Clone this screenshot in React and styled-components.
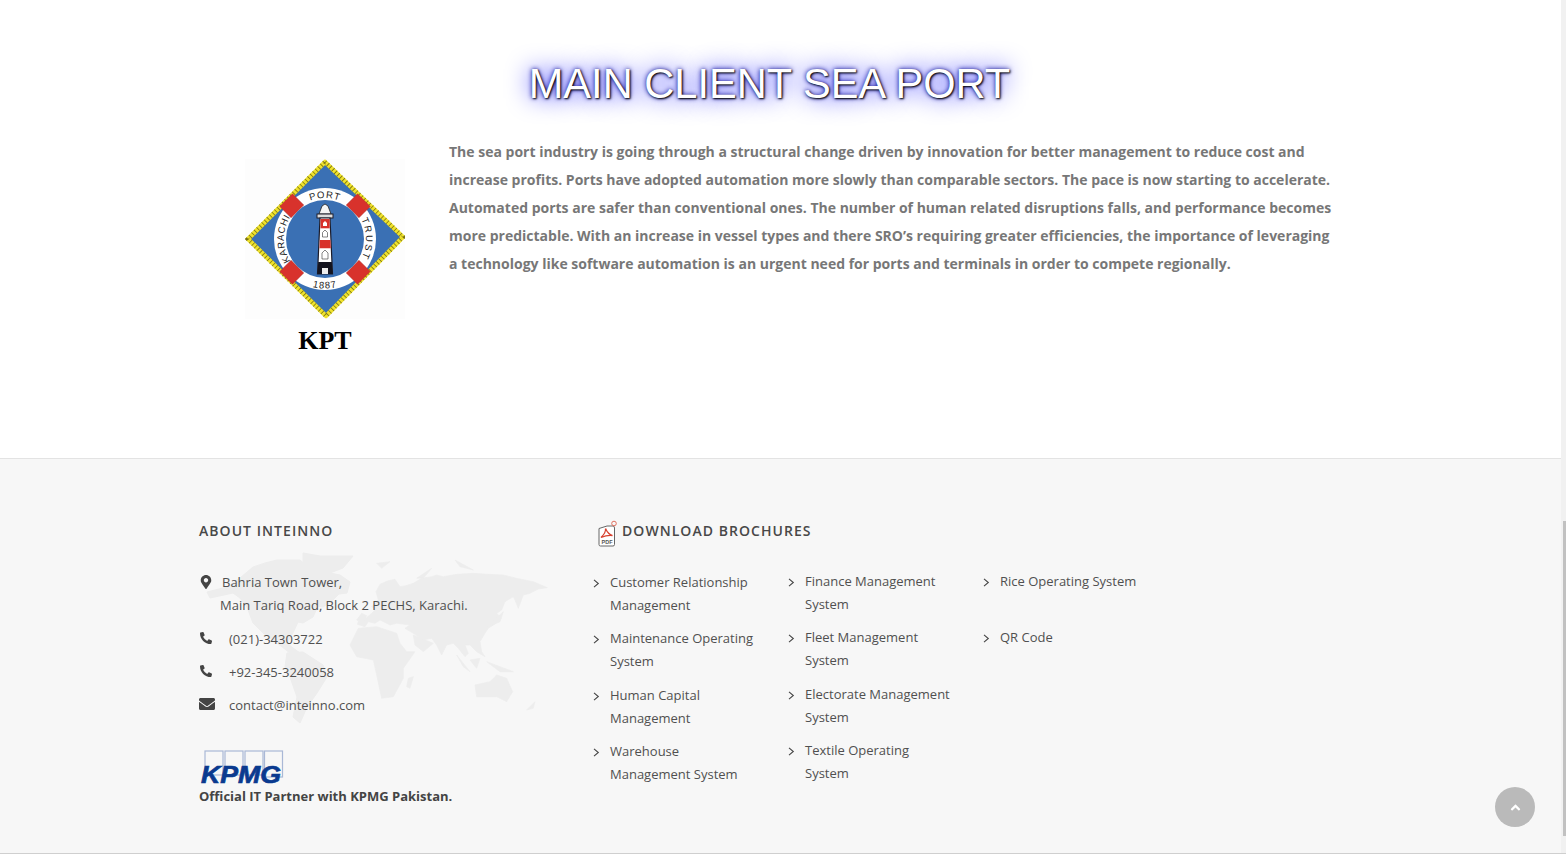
import React from 'react';
import styled, { createGlobalStyle } from 'styled-components';
import { FaMapMarkerAlt, FaPhoneAlt, FaEnvelope, FaAngleUp } from 'react-icons/fa';

const Global = createGlobalStyle`
  html, body { margin: 0; padding: 0; height: 855px; overflow: hidden; background: #fff; }
  * { box-sizing: border-box; }
`;

const Shell = styled.div`
  position: relative;
  width: 1566px;
  height: 855px;
  font-family: "Open Sans", sans-serif;
  color: #444;
`;
const Viewport = styled.div`
  display: flex;
  height: 853px;
`;
const Page = styled.main`
  width: 1561px;
  display: flex;
  flex-direction: column;
`;
const BottomRule = styled.div`
  height: 1px;
  background: #cfcfcf;
`;
const Track = styled.div`
  width: 5px;
  background: #f1f1f1;
  padding-top: 521px;
  display: flex;
  justify-content: flex-end;
`;
const Thumb = styled.div`
  width: 3px;
  height: 315px;
  background: #c1c1c1;
`;

const Intro = styled.section`
  height: 458px;
  background: #fff;
  padding-top: 59px;
`;
const Title = styled.h2`
  margin: 0 22px 0 0;
  text-align: center;
  font: 400 41.6px/50px "Liberation Sans", Arial, sans-serif;
  color: #fff;
  text-shadow: 1px 1px 2px #000, 0 0 25px #00f, 0 0 5px #00008b;
`;
const IntroBody = styled.div`
  display: flex;
  padding: 0 0 0 245px;
  margin-top: 29px;
  gap: 44px;
`;
const LogoColumn = styled.figure`
  margin: 21px 0 0;
  width: 160px;
  display: flex;
  flex-direction: column;
  align-items: center;
`;
const LogoCaption = styled.figcaption`
  font: 700 26px/30px "Liberation Serif", "Times New Roman", serif;
  color: #000;
  margin-top: 7px;
`;
const Lead = styled.p`
  margin: 0;
  width: 890px;
  font-size: 14px;
  font-weight: 700;
  line-height: 28px;
  color: #777;
`;

const Footer = styled.footer`
  flex: 1;
  display: flex;
  background: #f7f7f7;
  border-top: 1px solid #e3e3e3;
  padding: 62px 0 0 199px;
`;
const About = styled.div`
  position: relative;
  width: 395px;
`;
const MapArt = styled.svg`
  position: absolute;
  left: 0;
  top: 24px;
  width: 360px;
  height: 190px;
`;
const Heading = styled.h3`
  position: relative;
  margin: 0;
  font-size: 14px;
  font-weight: 600;
  line-height: 20px;
  letter-spacing: 1.05px;
  color: #484848;
  text-transform: uppercase;
`;
const ContactList = styled.ul`
  position: relative;
  list-style: none;
  margin: 30.4px 0 0;
  padding: 0;
  display: flex;
  flex-direction: column;
  gap: 10.2px;
  font-size: 13px;
  line-height: 23px;
  color: #505050;
`;
const ContactRow = styled.li`
  display: flex;
  align-items: flex-start;
`;
const ContactIcon = styled.span`
  width: ${p => p.$w}px;
  flex: none;
  display: flex;
  align-items: center;
  height: 21px;
  padding-left: ${p => p.$inset || 0}px;
  font-size: ${p => p.$size}px;
  color: #444;
`;
const AddressLine = styled.span`
  display: block;
  margin-left: ${p => p.$shift || 0}px;
`;
const Partner = styled.div`
  position: relative;
  margin-top: 33px;
`;
const KpmgMark = styled.svg`
  display: block;
  width: 88px;
  height: 40px;
  margin-bottom: -4px;
`;
const PartnerText = styled.div`
  font-size: 13px;
  font-weight: 700;
  line-height: 18px;
  color: #444;
  margin-top: 1px;
`;

const Brochures = styled.div`
  width: 600px;
`;
const BrochureHead = styled.div`
  display: flex;
  align-items: flex-start;
  gap: 5px;
  padding-left: 4px;
`;
const PdfIcon = styled.svg`
  width: 19px;
  height: 27px;
  flex: none;
  margin-top: -1px;
`;
const Columns = styled.div`
  display: grid;
  grid-template-columns: repeat(3, 195px);
  margin-top: 23px;
`;
const LinkColumn = styled.ul`
  list-style: none;
  margin: ${p => p.$offset || 0}px 0 0;
  padding: 0;
  display: flex;
  flex-direction: column;
  gap: 10.4px;
  font-size: 13px;
  line-height: 23px;
  color: #505050;
`;
const LinkItem = styled.li`
  position: relative;
  padding-left: 16px;
  min-height: 46px;
`;
const Chevron = styled.svg`
  position: absolute;
  left: -1px;
  top: 8px;
  width: 7px;
  height: 9px;
  fill: none;
  stroke: #444;
  stroke-width: 1.1;
`;
const LinkLine = styled.span`
  display: block;
`;
const ToTop = styled.button`
  position: absolute;
  left: 1495px;
  top: 787px;
  width: 40px;
  height: 40px;
  padding: 0;
  border: 0;
  border-radius: 50%;
  background: #bababa;
  color: #fff;
  display: flex;
  align-items: center;
  justify-content: center;
  font-size: 15px;
`;

const columns = [
  { offset: 1, items: [['Customer Relationship', 'Management'], ['Maintenance Operating', 'System'], ['Human Capital', 'Management'], ['Warehouse', 'Management System']] },
  { offset: 0, items: [['Finance Management', 'System'], ['Fleet Management', 'System'], ['Electorate Management', 'System'], ['Textile Operating', 'System']] },
  { offset: 0, items: [['Rice Operating System'], ['QR Code']] },
];

const westLand = [
  '207,592 227,587 240,578 253,567 265,563 277,560 300,560 307,566 313,572 322,570 330,573 340,575 350,582 347,593 339,594 333,600 323,607 318,606 313,617 303,623 298,622 293,633 287,643 293,648 300,653 290,653 277,643 263,633 253,623 247,607 240,598 233,593 210,598',
  '303,553 320,556 353,556 343,568 330,573 320,578 310,575 303,565',
  '287,653 303,652 323,665 327,677 317,693 307,707 300,723 293,717 297,697 290,677 285,667',
];
const eastLand = [
  '172,238 178,222 200,218 215,205 225,195 215,185 235,165 228,140 240,118 262,108 285,103 300,125 318,122 340,115 365,100 395,95 410,90 430,95 470,88 520,85 565,88 610,90 650,100 700,110 742,128 715,132 690,145 670,150 655,190 645,165 640,155 615,170 605,195 590,205 605,220 580,240 565,250 555,265 540,290 545,320 555,335 530,320 510,300 495,300 505,325 495,335 475,310 460,295 440,300 425,330 410,300 395,280 370,285 340,265 315,250 330,240 290,235 270,240 240,225 225,235 205,230 195,245',
  '150,300 175,250 230,245 290,265 300,295 320,320 345,320 310,370 310,400 280,455 245,460 230,390 220,345 170,335',
  '325,400 340,395 330,430 320,425',
  '340,270 400,295 370,320 345,300',
  '525,420 570,410 590,390 620,400 638,440 620,470 590,455 530,455',
  '680,495 705,470 700,490',
  '470,330 510,380 490,365',
  '510,345 540,340 530,370',
  '560,350 640,380 600,380',
  '555,250 610,200 600,230',
  '170,225 185,205 200,212 190,235',
  '230,55 270,50 245,70',
  '350,100 395,70 370,100',
  '465,45 520,75 480,65',
];

function KptLogo() {
  return (
    <svg width="160" height="160" viewBox="0 0 160 160" role="img" aria-label="Karachi Port Trust">
      <rect width="160" height="160" fill="#fdfdfd" />
      <polygon points="80,3 158,78 81,157 3,80" fill="#3a70b4" stroke="#efe22c" strokeWidth="4.5" strokeLinejoin="round" />
      <polygon points="80,3 158,78 81,157 3,80" fill="none" stroke="#7a7212" strokeWidth="4.5" strokeDasharray=".8 2.8" />
      <g transform="translate(80,80)">
        <circle r="51" fill="#fff" />
        {[45, 135, 225, 315].map(a => (
          <rect key={a} x="-9" y="-55" width="18" height="16" fill="#d8322c" stroke="#a8302a" strokeWidth=".4" transform={`rotate(${a})`} />
        ))}
        <circle r="39" fill="#3a70b4" />
      </g>
      <defs>
        <path id="arcTop" d="M 53.6 48.6 A 41 41 0 0 1 106.4 48.6" />
        <path id="arcRight" d="M 111.4 53.6 A 41 41 0 0 1 111.4 106.4" />
        <path id="arcLeft" d="M 48.6 106.4 A 41 41 0 0 1 48.6 53.6" />
        <path id="arcBottom" d="M 51.6 120.5 A 49.5 49.5 0 0 0 108.4 120.5" />
      </defs>
      <g fontFamily='"Liberation Sans", sans-serif' fontSize="9.500" fill="#222">
        <text textAnchor="middle" letterSpacing="1"><textPath href="#arcTop" startOffset="50%">PORT</textPath></text>
        <text textAnchor="middle" letterSpacing="1.800"><textPath href="#arcRight" startOffset="50%">TRUST</textPath></text>
        <text textAnchor="middle" letterSpacing=".6"><textPath href="#arcLeft" startOffset="50%">KARACHI</textPath></text>
        <text textAnchor="middle" letterSpacing="1"><textPath href="#arcBottom" startOffset="50%">1887</textPath></text>
      </g>
      <polygon points="77,47 80,45 83,47 86,55 74,55" fill="#f4f4f4" stroke="#222" strokeWidth=".8" />
      <rect x="72" y="55" width="16" height="4" fill="#ddd" stroke="#1c1c2a" strokeWidth="1" />
      <polygon points="75,59 85,59 87.5,115 72.5,115" fill="#fff" stroke="#1c1c2a" strokeWidth="1.2" />
      <rect x="75.5" y="60" width="9.2" height="9.3" fill="#d8322c" />
      <polygon points="74.8,81 85.4,81 85.8,89.3 74.5,89.3" fill="#d8322c" />
      <polygon points="73.2,103 86.9,103 87.5,115 72.5,115" fill="#14141f" />
      <rect x="77" y="109" width="6" height="6" fill="#eee" />
      <polygon points="80,62 82,64 82,67 78,67 78,64" fill="#fff" />
      <polygon points="80,71 82.5,73.5 82.5,78 77.5,78 77.5,73.5" fill="#fff" stroke="#333" strokeWidth=".6" />
      <polygon points="80,91 83,94 83,100 77,100 77,94" fill="#fff" stroke="#333" strokeWidth=".6" />
    </svg>
  );
}

export default function App() {
  return (
    <Shell>
      <Global />
      <Viewport>
        <Page>
          <Intro>
            <Title>MAIN CLIENT SEA PORT</Title>
            <IntroBody>
              <LogoColumn>
                <KptLogo />
                <LogoCaption>KPT</LogoCaption>
              </LogoColumn>
              <Lead>
                The sea port industry is going through a structural change driven by innovation for better management to reduce cost and increase profits. Ports have adopted automation more slowly than comparable sectors. The pace is now starting to accelerate. Automated ports are safer than conventional ones. The number of human related disruptions falls, and performance becomes more predictable. With an increase in vessel types and there SRO’s requiring greater efficiencies, the importance of leveraging a technology like software automation is an urgent need for ports and terminals in order to compete regionally.
              </Lead>
            </IntroBody>
          </Intro>
          <Footer>
            <About>
              <MapArt viewBox="199 545 360 190" aria-hidden="true">
                <g fill="#ededed" stroke="#ededed" strokeLinejoin="round">
                  {westLand.map((pts, i) => <polygon key={i} points={pts} />)}
                  <g transform="translate(300 545) scale(.3333)" strokeWidth="2">
                    {eastLand.map((pts, i) => <polygon key={i} points={pts} />)}
                  </g>
                </g>
              </MapArt>
              <Heading>About Inteinno</Heading>
              <ContactList>
                <ContactRow>
                  <ContactIcon $w={23} $size={14}><FaMapMarkerAlt /></ContactIcon>
                  <div>
                    <AddressLine>Bahria Town Tower,</AddressLine>
                    <AddressLine $shift={-2}>Main Tariq Road, Block 2 PECHS, Karachi.</AddressLine>
                  </div>
                </ContactRow>
                <ContactRow>
                  <ContactIcon $w={30} $size={12} $inset={1}><FaPhoneAlt /></ContactIcon>
                  <span>(021)-34303722</span>
                </ContactRow>
                <ContactRow>
                  <ContactIcon $w={30} $size={12} $inset={1}><FaPhoneAlt /></ContactIcon>
                  <span>+92-345-3240058</span>
                </ContactRow>
                <ContactRow>
                  <ContactIcon $w={30} $size={16}><FaEnvelope /></ContactIcon>
                  <span>contact@inteinno.com</span>
                </ContactRow>
              </ContactList>
              <Partner>
                <KpmgMark viewBox="0 0 88 40" aria-label="KPMG">
                  <g fill="none" stroke="#a9b8d6" strokeWidth="1.2">
                    <rect x="6" y="1" width="18" height="24" />
                    <rect x="26" y="1" width="18" height="24" />
                    <rect x="46" y="1" width="18" height="24" />
                    <rect x="65.5" y="1" width="18" height="26" />
                  </g>
                  <text x="2" y="33" fontFamily='"Liberation Sans", sans-serif' fontWeight="700" fontStyle="italic" fontSize="24" fill="#0a3a8f" stroke="#0a3a8f" strokeWidth=".7" textLength="80" lengthAdjust="spacingAndGlyphs">KPMG</text>
                </KpmgMark>
                <PartnerText>Official IT Partner with KPMG Pakistan.</PartnerText>
              </Partner>
            </About>
            <Brochures>
              <BrochureHead>
                <PdfIcon viewBox="0 0 19 27" aria-hidden="true">
                  <path d="M1 8.5 L9 6 L15 6 Q16.5 6 16.5 8 V24.5 Q16.5 26 15 26 H2.500 Q1 26 1 24.500 Z" fill="#fff" stroke="#666" strokeWidth="1" />
                  <path d="M3 17.5 C6 14.500 8 11 7.500 8.500 C9 12 11 14.500 14.500 15.500 C10.500 15 6.500 16 3 17.500 Z" fill="none" stroke="#d8412f" strokeWidth="1.300" />
                  <circle cx="16" cy="3.500" r="2.300" fill="none" stroke="#e0705f" strokeWidth="1" />
                  <text x="3.500" y="24" fontFamily='"Liberation Sans", sans-serif' fontSize="5.500" fontWeight="700" fill="#555">PDF</text>
                </PdfIcon>
                <Heading>Download Brochures</Heading>
              </BrochureHead>
              <Columns>
                {columns.map((col, c) => (
                  <LinkColumn key={c} $offset={col.offset}>
                    {col.items.map((lines, i) => (
                      <LinkItem key={i}>
                        <Chevron viewBox="0 0 7 9" aria-hidden="true"><path d="M1 .8 L5.300 4.500 L1 8.200" /></Chevron>
                        {lines.map(l => <LinkLine key={l}>{l}</LinkLine>)}
                      </LinkItem>
                    ))}
                  </LinkColumn>
                ))}
              </Columns>
            </Brochures>
          </Footer>
        </Page>
        <Track><Thumb /></Track>
      </Viewport>
      <BottomRule />
      <ToTop aria-label="Back to top"><FaAngleUp /></ToTop>
    </Shell>
  );
}
